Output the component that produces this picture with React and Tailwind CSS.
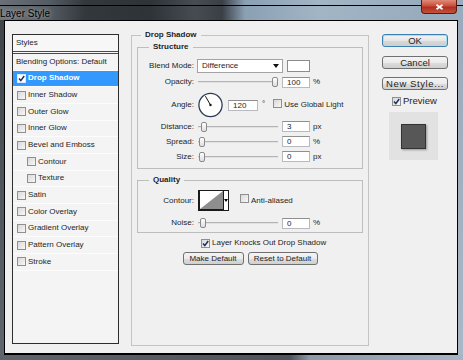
import React from "react";

const styleItems = [
  { label: "Blending Options: Default", plain: true },
  { label: "Drop Shadow", checked: true, active: true },
  { label: "Inner Shadow" },
  { label: "Outer Glow" },
  { label: "Inner Glow" },
  { label: "Bevel and Emboss" },
  { label: "Contour", indent: true },
  { label: "Texture", indent: true },
  { label: "Satin" },
  { label: "Color Overlay" },
  { label: "Gradient Overlay" },
  { label: "Pattern Overlay" },
  { label: "Stroke" },
];

function Check({ checked, white }) {
  return (
    <span
      className={
        "inline-flex items-center justify-center w-[9px] h-[9px] shrink-0 border " +
        (white
          ? "border-[#d8e8ff] bg-white"
          : "border-[#8e8f8f] bg-[linear-gradient(135deg,#d9d9d9,#f7f7f7)]")
      }
    >
      {checked && (
        <svg width="7" height="7" viewBox="0 0 7 7">
          <path d="M1 3.6 L2.8 5.6 L6.2 1" stroke="#1c2c5c" strokeWidth="1.5" fill="none" />
        </svg>
      )}
    </span>
  );
}

function Slider({ thumb }) {
  return (
    <div className="relative ml-[4px] w-[80px] h-[10px]">
      <div className="absolute left-0 right-0 top-[4px] h-[2px] border-t border-[#b4b4b4] bg-[#e2e2e2]" />
      <div
        className={
          "absolute top-0 w-[6px] h-[10px] rounded-[2px] border border-[#8a8a8a] bg-[linear-gradient(#ffffff,#dedede)] " +
          thumb
        }
      />
    </div>
  );
}

function Field({ value, wide }) {
  return (
    <div
      className={
        "h-[11px] bg-white border border-[#b8bac0] border-t-[#8e8f8f] pl-[4px] leading-[9px] " +
        (wide ? "w-[30px]" : "w-[28px]")
      }
    >
      {value}
    </div>
  );
}

function SliderRow({ label, thumb, value, unit }) {
  return (
    <div className="flex items-center h-[15px]">
      <div className="w-[56px] text-right">{label}</div>
      <Slider thumb={thumb} />
      <div className="ml-[4px]">
        <Field value={value} />
      </div>
      <div className="ml-[3px]">{unit}</div>
    </div>
  );
}

function WinButton({ children, primary, small, wide }) {
  return (
    <div
      className={
        "flex items-center justify-center h-[13px] rounded-[3px] border leading-none " +
        (primary
          ? "border-[#3c7fb1] shadow-[inset_0_0_0_1px_#9fe2f7] bg-[linear-gradient(#f4f4f4,#e6e6e6_50%,#d9d9d9_51%,#cdcdcd)] "
          : "border-[#707070] bg-[linear-gradient(#f4f4f4,#ebebeb_50%,#dddddd_51%,#cfcfcf)] ") +
        (small ? "text-[8px] " : "text-[9.5px] ") +
        (wide ? "tracking-[0.6px]" : "")
      }
    >
      {children}
    </div>
  );
}

export default function App() {
  return (
    <div className="relative w-[463px] h-[360px] overflow-hidden flex flex-col bg-[linear-gradient(to_right,#5b6168,#4a5057_120px,#4c5359_280px,#8e9cab_320px,#a5b5c4)] font-['Liberation_Sans',Arial,sans-serif] text-[8px] text-[#1e1e1e]">
      {/* title bar */}
      <div className="h-[20px] shrink-0 bg-[linear-gradient(to_right,#6a7077_0px,#555b62_50px,#33383d_85px,#2e3338_150px,#464c52_195px,#393f45_222px,#8aa0b3_245px,#a2b5c5_320px,#98acbe_420px)]">
        <div className="h-[5px]" />
        <div className="h-[15px] border-t border-black flex items-center">
          <span className="ml-0 text-[10px] text-black [text-shadow:0_0_5px_rgba(255,255,255,0.7)]">
            Layer Style
          </span>
        </div>
      </div>
      <div className="absolute left-[421px] top-0 w-[36px] h-[14px] rounded-b-[4px] border border-t-0 border-[#5a1a12] bg-[linear-gradient(#e08a78,#c8503c_45%,#b02f1e_55%,#c4523c)] flex items-center justify-center">
        <svg width="9" height="6" viewBox="0 0 9 6">
          <path d="M1.5 0.8 L7.5 5.2 M7.5 0.8 L1.5 5.2" stroke="#fff" strokeWidth="1.7" />
        </svg>
      </div>

      <div className="flex flex-1 min-h-0">
        <div className="w-[4px] bg-[linear-gradient(#3f454b,#5f666e)]" />
        <div className="w-[454px] border border-b-2 border-black bg-[#f0f0f0] flex items-start pl-[7px]">
          {/* styles list */}
          <div className="mt-[13px] w-[107px] h-[310px] border border-[#2e2e2e] bg-[#f4f4f4]">
            <div className="h-[19px] pl-[3px] flex items-center border-b-[3px] border-double border-[#4a4a4a] bg-[#f7f7f7]">
              Styles
            </div>
            {styleItems.map((it) => (
              <div
                key={it.label}
                className={
                  "h-[16.67px] flex items-center border-b border-[#fcfcfc] " +
                  (it.active ? "bg-[#3399ff] text-white font-bold " : "") +
                  (it.plain ? "pl-[3px]" : it.indent ? "pl-[14px]" : "pl-[4px]")
                }
              >
                {!it.plain && <Check checked={it.checked} white={it.active} />}
                <span className={it.plain ? "" : "ml-[2px]"}>{it.label}</span>
              </div>
            ))}
          </div>

          {/* drop shadow group */}
          <fieldset className="ml-[12px] mt-[9px] w-[238px] h-[316px] min-w-0 border border-[#c4c4c4] px-[5px]">
            <legend className="ml-[4px] px-[4px] font-bold leading-[10px]">Drop Shadow</legend>
            <div className="pt-[2px]">
              <fieldset className="min-w-0 border border-[#bdbdbd] pt-[7px] pb-[4px]">
                <legend className="ml-[11px] px-[4px] font-bold leading-[10px]">Structure</legend>
                <div className="flex items-center h-[14px]">
                  <div className="w-[56px] text-right">Blend Mode:</div>
                  <div className="ml-[3px] w-[86px] h-[14px] bg-white border border-[#a3a3a3] flex items-center pl-[4px] pr-[3px]">
                    <span className="flex-1">Difference</span>
                    <svg width="6" height="4" viewBox="0 0 6 4">
                      <polygon points="0,0 6,0 3,4" fill="#111" />
                    </svg>
                  </div>
                  <div className="ml-[4px] w-[23px] h-[12px] bg-white border border-[#8c8c8c]" />
                </div>
                <div className="mt-[1px] flex items-center h-[16px]">
                  <div className="w-[56px] text-right">Opacity:</div>
                  <Slider thumb="left-[74px]" />
                  <div className="ml-[4px]">
                    <Field value="100" />
                  </div>
                  <div className="ml-[3px]">%</div>
                </div>
                <div className="mt-[1px] flex items-center h-[28px]">
                  <div className="w-[56px] text-right">Angle:</div>
                  <svg className="ml-[3px]" width="27" height="26" viewBox="0 0 27 26">
                    <circle cx="13.5" cy="13" r="11.6" fill="#fff" stroke="#2c3a58" strokeWidth="1.3" />
                    <line x1="13.5" y1="13" x2="8.4" y2="4.2" stroke="#111" strokeWidth="1" />
                    <circle cx="13.5" cy="13" r="1.2" fill="#111" />
                  </svg>
                  <div className="ml-[4px]">
                    <Field value="120" wide />
                  </div>
                  <div className="ml-[4px] self-start mt-[7px]">°</div>
                  <div className="ml-[8px]">
                    <Check />
                  </div>
                  <div className="ml-[2px]">Use Global Light</div>
                </div>
                <SliderRow label="Distance:" thumb="left-[3px]" value="3" unit="px" />
                <SliderRow label="Spread:" thumb="left-[1px]" value="0" unit="%" />
                <SliderRow label="Size:" thumb="left-[1px]" value="0" unit="px" />
              </fieldset>

              <fieldset className="mt-[6px] min-w-0 border border-[#bdbdbd] pt-[5px] pb-[2px]">
                <legend className="ml-[11px] px-[4px] font-bold leading-[10px]">Quality</legend>
                <div className="flex items-center h-[21px]">
                  <div className="w-[56px] text-right">Contour:</div>
                  <div className="ml-[4px] w-[31px] h-[21px] flex border border-[#1a1a1a] bg-white">
                    <div className="w-[24px] border-l border-b border-[#1a1a1a]">
                      <svg width="23" height="18" viewBox="0 0 23 18" className="block">
                        <polygon points="0,18 23,0 23,18" fill="#8e8e8e" />
                      </svg>
                    </div>
                    <div className="flex-1 border-l border-[#1a1a1a] flex items-center justify-center">
                      <svg width="4" height="3" viewBox="0 0 4 3">
                        <polygon points="0,0 4,0 2,3" fill="#000" />
                      </svg>
                    </div>
                  </div>
                  <div className="ml-[11px]">
                    <Check />
                  </div>
                  <div className="ml-[2px]">Anti-aliased</div>
                </div>
                <div className="mt-[5px] flex items-center h-[14px]">
                  <div className="w-[56px] text-right">Noise:</div>
                  <Slider thumb="left-[2px]" />
                  <div className="ml-[4px]">
                    <Field value="0" />
                  </div>
                  <div className="ml-[3px]">%</div>
                </div>
              </fieldset>

              <div className="mt-[4px] h-[12px] flex items-center pl-[64px]">
                <Check checked />
                <span className="ml-[2px]">Layer Knocks Out Drop Shadow</span>
              </div>
              <div className="mt-[3px] flex justify-center gap-[4px]">
                <div className="w-[61px]">
                  <WinButton small>Make Default</WinButton>
                </div>
                <div className="w-[70px]">
                  <WinButton small>Reset to Default</WinButton>
                </div>
              </div>
            </div>
          </fieldset>

          {/* right column */}
          <div className="ml-[13px] mt-[13px] w-[66px] flex flex-col">
            <WinButton primary>OK</WinButton>
            <div className="mt-[9px]">
              <WinButton>Cancel</WinButton>
            </div>
            <div className="mt-[8px]">
              <WinButton wide>New Style...</WinButton>
            </div>
            <div className="mt-[6px] h-[10px] flex items-center pl-[10px]">
              <Check checked />
              <span className="ml-[2px] text-[9.5px]">Preview</span>
            </div>
            <div className="mt-[6px] ml-[7px] w-[49px] h-[48px] bg-[#e2e2e2] flex items-center justify-center">
              <div className="w-[25px] h-[25px] bg-[#575757] border border-[#333] shadow-[1px_1px_2px_rgba(0,0,0,0.35)]" />
            </div>
          </div>
        </div>
        <div className="w-[5px] bg-[linear-gradient(#9aaabb,#a9b8c6)]" />
      </div>
      <div className="h-[5px] shrink-0 bg-[linear-gradient(to_right,#5d646b,#4e545a_290px,#8c9aa8_310px,#a6b5c3)]" />
    </div>
  );
}
